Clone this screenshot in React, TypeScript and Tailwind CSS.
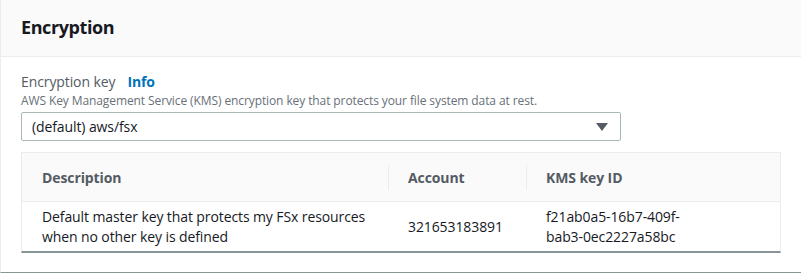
const rows = [
  {
    description: 'Default master key that protects my FSx resources when no other key is defined',
    account: '321653183891',
    keyId: 'f21ab0a5-16b7-409f-bab3-0ec2227a58bc',
  },
]

function Caret() {
  return (
    <svg width="12" height="8" viewBox="0 0 12 8" className="text-[#545b64]">
      <path d="M0 0h12L6 8z" fill="currentColor" />
    </svg>
  )
}

export default function App() {
  return (
    <div className="w-[801px] h-[274px] bg-white font-['Open_Sans','Liberation_Sans',sans-serif] tracking-[-0.1px] overflow-hidden">
      <div className="h-[273px] border-l border-[#eaeded] border-b border-b-[#879596] flex flex-col">
        <div className="h-[57px] shrink-0 bg-[#fafafa] border-b border-[#eaeded] px-5 flex items-center">
          <h2 className="text-[18px] font-bold text-[#16191f] leading-none tracking-[-0.4px] -mt-[2px]">Encryption</h2>
        </div>

        <div className="pl-5 pr-5 pt-[14px]">
          <div className="flex items-center gap-3 text-[14px] leading-[22px]">
            <span className="text-[#545b64]">Encryption key</span>
            <a className="text-[#0073bb] font-bold">Info</a>
          </div>
          <p className="text-[12px] leading-[16px] text-[#687078]">
            AWS Key Management Service (KMS) encryption key that protects your file system data at rest.
          </p>

          <div className="mt-[3px] w-[600px] h-[29px] border border-[#aab7b8] rounded-[2px] flex items-center justify-between pl-[10px] pr-[12px]">
            <span className="text-[14px] text-[#16191f]">(default) aws/fsx</span>
            <Caret />
          </div>

          <div className="mt-[11px] w-[760px] border-x border-[#eaeded] border-t border-t-[#eaeded] border-b-2 border-b-[#879596]">
            <div className="grid grid-cols-[366px_138px_1fr] h-[49px] bg-[#fafafa] border-b border-[#eaeded] text-[14px] font-bold text-[#545b64]">
              <div className="flex items-center pl-5">Description</div>
              <div className="flex items-center pl-5 relative">
                <span className="absolute left-0 top-[12px] h-[25px] border-l border-[#eaeded]" />
                Account
              </div>
              <div className="flex items-center pl-5 relative">
                <span className="absolute left-0 top-[12px] h-[25px] border-l border-[#eaeded]" />
                KMS key ID
              </div>
            </div>
            {rows.map((row) => (
              <div key={row.account} className="grid grid-cols-[366px_138px_1fr] h-[49px] text-[14px] leading-[20px] text-[#16191f]">
                <div className="flex items-center pl-5">{row.description}</div>
                <div className="flex items-center pl-5">{row.account}</div>
                <div className="flex items-center pl-5">
                  <span className="max-w-[150px]">{row.keyId}</span>
                </div>
              </div>
            ))}
          </div>
        </div>
      </div>
    </div>
  )
}
